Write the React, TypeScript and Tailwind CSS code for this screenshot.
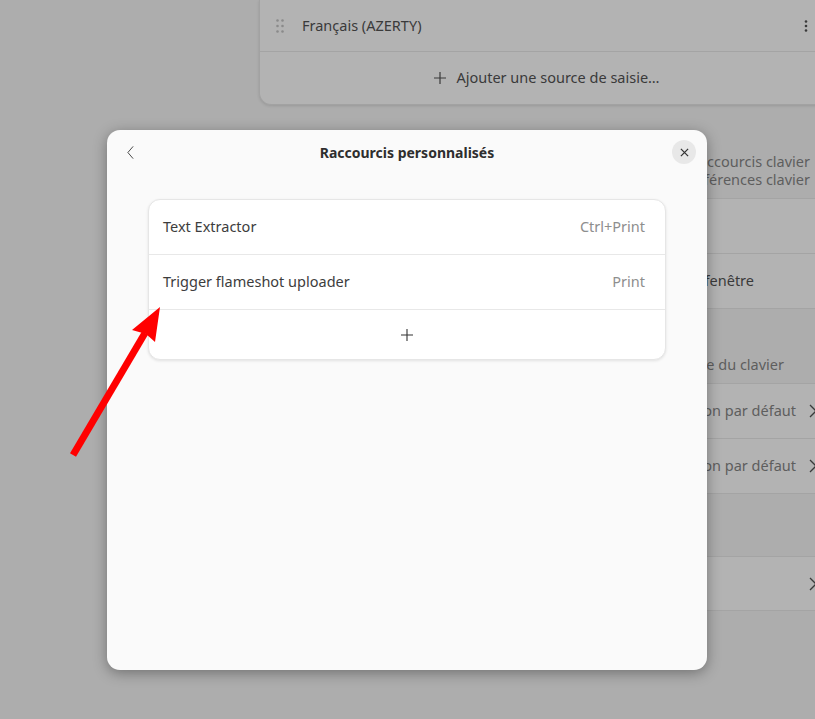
import React from "react";

const font = { fontFamily: '"Noto Sans", "Open Sans", sans-serif' };

function Chevron({ className = "" }: { className?: string }) {
  return (
    <svg viewBox="0 0 8 14" className={className} fill="none" stroke="currentColor" strokeWidth="1.3">
      <path d="M1 1l6 6-6 6" />
    </svg>
  );
}

// Dimmed settings page that sits behind the modal
function SettingsBackdrop() {
  return (
    <div className="ml-[259px] flex w-[576px] flex-col text-[14.5px] text-[#3a3a3a]">
      {/* input sources */}
      <div className="rounded-b-xl border border-t-0 border-[#a2a2a2] bg-[#b3b3b3] shadow-[0_1px_3px_rgba(0,0,0,0.12)]">
        <div className="flex h-[52px] items-center border-b border-[#a4a4a4] pl-[16px] pr-[26px]">
          <svg viewBox="0 0 8 14" className="h-[14px] w-[8px] text-[#8a8a8a]" fill="currentColor">
            <circle cx="1.5" cy="1.5" r="1.3" />
            <circle cx="6.5" cy="1.5" r="1.3" />
            <circle cx="1.5" cy="7" r="1.3" />
            <circle cx="6.5" cy="7" r="1.3" />
            <circle cx="1.5" cy="12.5" r="1.3" />
            <circle cx="6.5" cy="12.5" r="1.3" />
          </svg>
          <span className="ml-[18px] flex-1">Français (AZERTY)</span>
          <svg viewBox="0 0 4 12" className="h-[12px] w-[4px]" fill="currentColor">
            <circle cx="2" cy="1.5" r="1.3" />
            <circle cx="2" cy="6" r="1.3" />
            <circle cx="2" cy="10.5" r="1.3" />
          </svg>
        </div>
        <div className="flex h-[52px] items-center justify-center gap-[10px]">
          <svg viewBox="0 0 12 12" className="h-[12px] w-[12px]" fill="none" stroke="currentColor" strokeWidth="1.2">
            <path d="M6 0v12M0 6h12" />
          </svg>
          <span>Ajouter une source de saisie…</span>
        </div>
      </div>

      {/* input source switching */}
      <p className="mt-[47px] pr-[25px] text-right leading-[18px] text-[#5e5e5e]">
        Modifiable dans les raccourcis clavier
        <br />
        depuis les préférences clavier
      </p>
      <div className="mt-[10px] rounded-xl border border-[#a4a4a4] bg-[#b3b3b3]">
        <div className="h-[55px] border-b border-[#a4a4a4]" />
        <div className="flex h-[54px] items-center">
          <span className="w-[494px] whitespace-nowrap text-right">Par fenêtre</span>
        </div>
      </div>

      {/* special character entry */}
      <p className="mt-[46px] pr-[51px] text-right leading-[18px] text-[#5e5e5e]">Touche spéciale du clavier</p>
      <div className="mt-[10px] rounded-xl border border-[#a4a4a4] bg-[#b3b3b3] text-[#5e5e5e]">
        <div className="flex h-[55px] items-center justify-between border-b border-[#a4a4a4] pl-[14px] pr-[17px]">
          <span className="text-[#3a3a3a]">Touche de caractères alternatifs</span>
          <div className="flex items-center gap-[13px]">
            <span>Disposition par défaut</span>
            <Chevron className="h-[14px] w-[8px] text-[#3a3a3a]" />
          </div>
        </div>
        <div className="flex h-[54px] items-center justify-between pl-[14px] pr-[17px]">
          <span className="text-[#3a3a3a]">Touche compose</span>
          <div className="flex items-center gap-[13px]">
            <span>Disposition par défaut</span>
            <Chevron className="h-[14px] w-[8px] text-[#3a3a3a]" />
          </div>
        </div>
      </div>

      {/* keyboard shortcuts */}
      <div className="mt-[62px] rounded-xl border border-[#a4a4a4] bg-[#b3b3b3]">
        <div className="flex h-[53px] items-center justify-between pl-[14px] pr-[17px]">
          <span>Afficher et personnaliser les raccourcis</span>
          <Chevron className="h-[14px] w-[8px] text-[#3a3a3a]" />
        </div>
      </div>
    </div>
  );
}

type Shortcut = { name: string; accel: string };

const shortcuts: Shortcut[] = [
  { name: "Text Extractor", accel: "Ctrl+Print" },
  { name: "Trigger flameshot uploader", accel: "Print" },
];

function CustomShortcutsDialog() {
  return (
    <div className="absolute left-[107px] top-[130px] flex h-[540px] w-[600px] flex-col rounded-[13px] bg-[#fafafa] shadow-[0_3px_14px_rgba(0,0,0,0.35)]">
      <header className="relative flex h-[44px] items-center justify-center">
        <button className="absolute left-[18px] top-[14px] flex h-[16px] w-[10px] items-center justify-center text-[#444]">
          <svg viewBox="0 0 8 16" className="h-[15px] w-[7px]" fill="none" stroke="currentColor" strokeWidth="1.1">
            <path d="M7 1L1 8l6 7" />
          </svg>
        </button>
        <h1 className="text-[14px] font-bold text-[#2e2e2e]">Raccourcis personnalisés</h1>
        <button className="absolute right-[11px] top-[10px] flex h-[24px] w-[24px] items-center justify-center rounded-full bg-[#e8e8e8] text-[#333]">
          <svg viewBox="0 0 10 10" className="h-[9px] w-[9px]" fill="none" stroke="currentColor" strokeWidth="1.4">
            <path d="M1 1l8 8M9 1L1 9" />
          </svg>
        </button>
      </header>

      <div className="mx-[41px] mt-[25px] overflow-hidden rounded-xl border border-[#e6e6e6] bg-white text-[14.5px] shadow-[0_1px_3px_rgba(0,0,0,0.1)]">
        {shortcuts.map((s) => (
          <div key={s.name} className="flex h-[55px] items-center justify-between border-b border-[#e8e8e8] pl-[14px] pr-[20px]">
            <span className="text-[#3d3d3d]">{s.name}</span>
            <span className="text-[#8e8e8e]">{s.accel}</span>
          </div>
        ))}
        <div className="flex h-[49px] items-center justify-center text-[#333]">
          <svg viewBox="0 0 12 12" className="h-[12px] w-[12px]" fill="none" stroke="currentColor" strokeWidth="1.1">
            <path d="M6 0v12M0 6h12" />
          </svg>
        </div>
      </div>
    </div>
  );
}

export default function App() {
  return (
    <div className="relative h-[719px] w-[815px] overflow-hidden bg-[#adadad]" style={font}>
      <SettingsBackdrop />
      <CustomShortcutsDialog />

      {/* annotation arrow */}
      <svg className="pointer-events-none absolute left-0 top-0 h-[719px] w-[815px]" viewBox="0 0 815 719">
        <line x1="73" y1="455" x2="145" y2="333" stroke="#ff0000" strokeWidth="7" />
        <polygon points="160,307 132,330 146,334 155,342" fill="#ff0000" />
      </svg>
    </div>
  );
}
